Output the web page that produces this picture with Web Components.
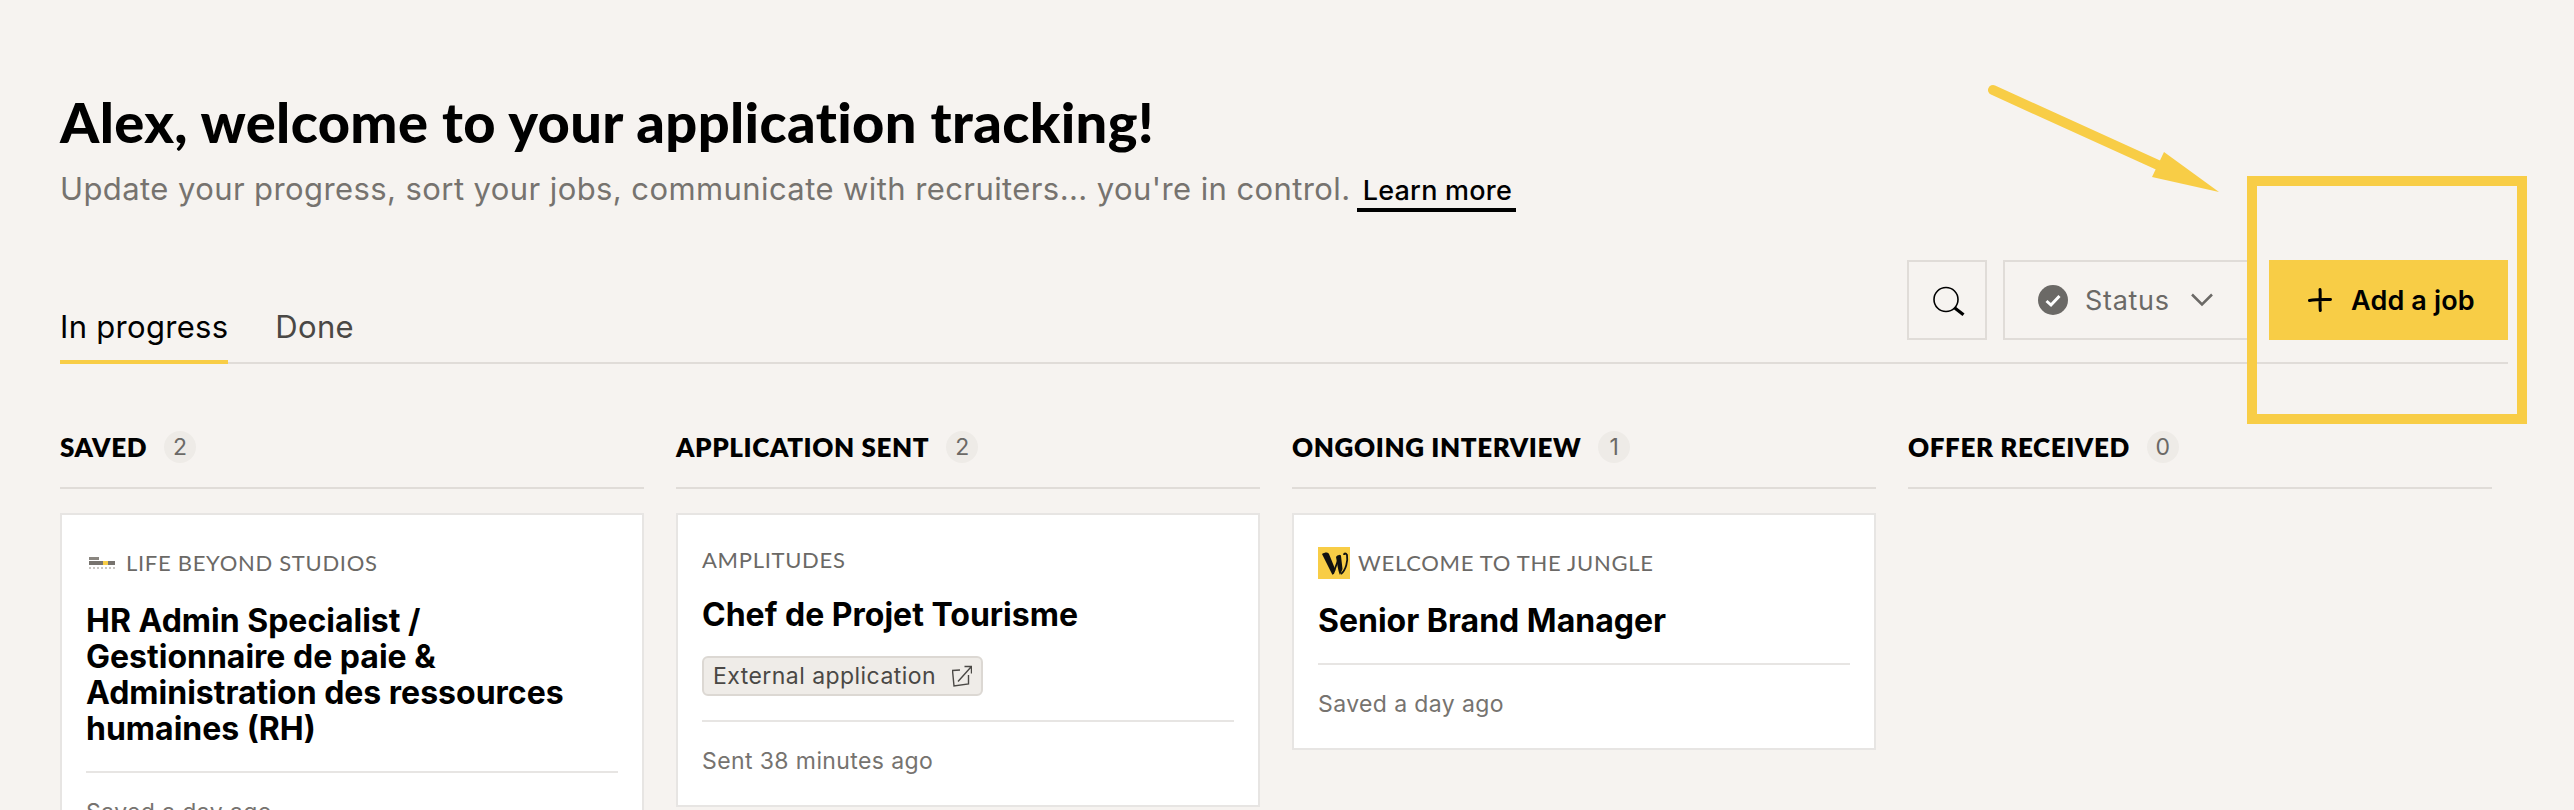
<!DOCTYPE html>
<html lang="en">
<head>
<meta charset="utf-8">
<title>Application tracking</title>
<style>
  html, body { margin: 0; height: 810px; overflow: hidden; background: #f6f3f0; }
  body { font-family: "Inter", "Liberation Sans", sans-serif; color: #000; position: relative; }
  tracker-page { display: block; }
</style>
</head>
<body>
<tracker-page>
  <page-intro>
    <span slot="title">Alex, welcome to your application tracking!</span>
    <span slot="text">Update your progress, sort your jobs, communicate with recruiters... you're in control.</span>
    <span slot="link">Learn more</span>
  </page-intro>

  <tab-toolbar></tab-toolbar>

  <job-board>
    <board-column name="Saved" count="2">
      <job-card company="Life Beyond Studios" logo="life" title="HR Admin Specialist / Gestionnaire de paie &amp; Administration des ressources humaines (RH)" footer="Saved a day ago"></job-card>
    </board-column>
    <board-column name="Application sent" count="2">
      <job-card company="Amplitudes" title="Chef de Projet Tourisme" tag="External application" footer="Sent 38 minutes ago"></job-card>
    </board-column>
    <board-column name="Ongoing interview" count="1">
      <job-card company="Welcome to the Jungle" logo="wttj" title="Senior Brand Manager" footer="Saved a day ago"></job-card>
    </board-column>
    <board-column name="Offer received" count="0"></board-column>
  </job-board>
</tracker-page>

<focus-annotation></focus-annotation>

<script>
const HEAD_FONT = '"Lato", "Liberation Sans", sans-serif';
const BODY_FONT = '"Inter", "Liberation Sans", sans-serif';

class TrackerPage extends HTMLElement {
  constructor() {
    super();
    this.attachShadow({ mode: 'open' });
    this.shadowRoot.innerHTML = `
      <style>
        :host { display: block; padding: 90px 66px 0 60px; }
      </style>
      <slot></slot>
    `;
  }
}
customElements.define('tracker-page', TrackerPage);

// Titulo y texto de bienvenida
class PageIntro extends HTMLElement {
  constructor() {
    super();
    this.attachShadow({ mode: 'open' });
    this.shadowRoot.innerHTML = `
      <style>
        :host { display: block; height: 122px; }
        h1 {
          margin: 0;
          font: 900 56px/64px ${HEAD_FONT};
          letter-spacing: .37px;
          color: #000;
        }
        p {
          margin: 15px 0 0;
          font: 400 31px/40px ${BODY_FONT};
          letter-spacing: .41px;
          color: #76736f;
          display: flex;
          align-items: baseline;
          gap: 6px;
        }
        a {
          font: 500 27px/32px ${BODY_FONT};
          letter-spacing: .25px;
          color: #000;
          border-bottom: 4px solid #000;
          padding: 0 4px 1px 6px;
        }
      </style>
      <h1><slot name="title"></slot></h1>
      <p><span><slot name="text"></slot></span> <a><slot name="link"></slot></a></p>
    `;
  }
}
customElements.define('page-intro', PageIntro);

// Pestañas con buscador, filtro y boton
class TabToolbar extends HTMLElement {
  constructor() {
    super();
    this.attachShadow({ mode: 'open' });
    this.shadowRoot.innerHTML = `
      <style>
        :host {
          display: flex;
          justify-content: space-between;
          align-items: flex-end;
          height: 102px;
          margin-top: 48px;
          border-bottom: 2px solid #e0dcd8;
          font-family: ${BODY_FONT};
        }
        .tabs { display: flex; gap: 47px; }
        .tab {
          font-size: 31px;
          letter-spacing: .3px;
          line-height: 36px;
          padding: 0 0 15px;
          color: #4a4845;
          margin-bottom: -2px;
          border-bottom: 4px solid transparent;
        }
        .tab.on { color: #000; border-bottom-color: #f8cd46; }
        .tools { display: flex; gap: 16px; align-self: flex-start; }
        .box {
          box-sizing: border-box;
          height: 80px;
          border: 2px solid #e0dcd8;
          display: flex;
          align-items: center;
          justify-content: center;
        }
        .search { width: 80px; }
        .search svg { margin-left: 4px; }
        .status {
          width: 250px;
          justify-content: flex-start;
          padding-left: 33px;
          gap: 17px;
          color: #6b6966;
          font-size: 27px;
          letter-spacing: .7px;
        }
        .status svg.chev { margin-left: 4px; }
        .add {
          box-sizing: border-box;
          width: 239px;
          height: 80px;
          padding-left: 39px;
          background: #f8cd46;
          display: flex;
          align-items: center;
          gap: 19px;
          color: #000;
          font-size: 27px;
          letter-spacing: .15px;
          font-weight: 600;
        }
      </style>
      <div class="tabs">
        <div class="tab on">In progress</div>
        <div class="tab">Done</div>
      </div>
      <div class="tools">
        <div class="box search">
          <svg width="32" height="32" viewBox="0 0 32 32" fill="none">
            <circle cx="13" cy="15.500" r="12" stroke="#000" stroke-width="1.600"/>
            <path d="M22.500 22.500l9 7-2 2.500-9-7z" fill="#000"/>
          </svg>
        </div>
        <div class="box status">
          <svg width="30" height="30" viewBox="0 0 30 30">
            <circle cx="15" cy="15" r="15" fill="#6b6966"/>
            <path d="M8.500 16l4.500 4 8.500-9" fill="none" stroke="#fff" stroke-width="3"/>
          </svg>
          <span>Status</span>
          <svg class="chev" width="22" height="14" viewBox="0 0 22 14">
            <path d="M1 1.500l10 10 10-10" fill="none" stroke="#6b6966" stroke-width="2.500"/>
          </svg>
        </div>
        <div class="add">
          <svg width="24" height="24" viewBox="0 0 24 24" fill="none" stroke="#000" stroke-width="3" stroke-linecap="round">
            <path d="M12 1.500c.6 7-.4 14 .3 21M1.500 12.500c7-1 14-.8 21-1"/>
          </svg>
          <span>Add a job</span>
        </div>
      </div>
    `;
  }
}
customElements.define('tab-toolbar', TabToolbar);

class JobBoard extends HTMLElement {
  constructor() {
    super();
    this.attachShadow({ mode: 'open' });
    this.shadowRoot.innerHTML = `
      <style>
        :host {
          display: grid;
          grid-template-columns: repeat(4, 584px);
          gap: 32px;
          margin-top: 67px;
          align-items: start;
        }
      </style>
      <slot></slot>
    `;
  }
}
customElements.define('job-board', JobBoard);

class BoardColumn extends HTMLElement {
  constructor() {
    super();
    this.attachShadow({ mode: 'open' });
    this.shadowRoot.innerHTML = `
      <style>
        :host { display: block; }
        header {
          display: flex;
          align-items: center;
          gap: 17px;
          height: 32px;
          padding-bottom: 24px;
          border-bottom: 2px solid #e0dcd8;
          margin-bottom: 24px;
        }
        h2 {
          margin: 0;
          font: 800 26px/32px ${HEAD_FONT};
          letter-spacing: .6px;
          text-transform: uppercase;
        }
        .count {
          width: 32px;
          height: 32px;
          border-radius: 50%;
          background: #eeebe7;
          color: #6b6966;
          font: 400 23px/32px ${BODY_FONT};
          text-align: center;
        }
      </style>
      <header>
        <h2>${this.getAttribute('name')}</h2>
        <span class="count">${this.getAttribute('count')}</span>
      </header>
      <slot></slot>
    `;
  }
}
customElements.define('board-column', BoardColumn);

const LOGOS = {
  life: `<svg class="logo" width="32" height="32" viewBox="0 0 32 32">
      <rect x="3" y="10" width="10" height="3" fill="#8a8680"/>
      <rect x="3" y="14" width="14" height="4" fill="#77736e"/>
      <rect x="17" y="14" width="5" height="4" fill="#f8cd46"/>
      <rect x="22" y="14" width="7" height="4" fill="#77736e"/>
      <path d="M3 21h26" stroke="#c9c6c2" stroke-width="2" stroke-dasharray="2 2"/>
    </svg>`,
  wttj: `<svg class="logo" width="32" height="32" viewBox="0 0 32 32">
      <rect width="32" height="32" fill="#f8cd46"/>
      <path d="M4 7c3-2 6-2 7 0l6.500 16-3 5zM18 10c1-2 4-3 5-1l1.500 13-2.500 6c-2-4-3-13-4-18z" fill="#111"/>
      <path d="M15 27L22 8M23 27c5-4 7-13 6-19-1-2-3-2-3 0" fill="none" stroke="#111" stroke-width="1.800"/>
    </svg>`
};

// Tarjeta de una oferta
class JobCard extends HTMLElement {
  constructor() {
    super();
    this.attachShadow({ mode: 'open' });
    const logo = LOGOS[this.getAttribute('logo')] || '';
    const tag = this.getAttribute('tag');
    this.shadowRoot.innerHTML = `
      <style>
        :host {
          display: block;
          box-sizing: border-box;
          background: #fff;
          border: 2px solid #e7e5e3;
          padding: 32px 24px 30px;
        }
        .company {
          display: flex;
          align-items: center;
          gap: 8px;
          font: 400 22px/26px ${HEAD_FONT};
          letter-spacing: .7px;
          color: #6b6966;
          text-transform: uppercase;
        }
        h3 {
          margin: 24px 0 0;
          font: 700 32px/36px ${BODY_FONT};
          color: #000;
        }
        .tag-row { display: flex; margin-top: 23px; }
        .tag {
          display: inline-flex;
          align-items: center;
          gap: 16px;
          box-sizing: border-box;
          height: 40px;
          padding: 0 9px;
          background: #efece8;
          border: 2px solid #dcd8d3;
          border-radius: 6px;
          font: 400 23px/1 ${BODY_FONT};
          letter-spacing: .45px;
          color: #4a4845;
        }
        hr {
          border: 0;
          height: 2px;
          background: #e7e5e3;
          margin: 24px 0 25px;
        }
        .foot {
          font: 400 23px/28px ${BODY_FONT};
          letter-spacing: .4px;
          color: #76736f;
        }
      </style>
      <div class="company">${logo}<span>${this.getAttribute('company')}</span></div>
      <h3>${this.getAttribute('title').replace(/&/g, '&amp;')}</h3>
      ${tag ? `<div class="tag-row"><span class="tag">${tag}
        <svg width="20" height="22" viewBox="0 0 20 22" fill="none" stroke="#4a4845" stroke-width="1.400">
          <path d="M8 5L.5 5.500 2 21l14.500-2V10M6 16.500L19 2M12.500 1.500h7v7"/>
        </svg></span></div>` : ''}
      <hr>
      <div class="foot">${this.getAttribute('footer')}</div>
    `;
  }
}
customElements.define('job-card', JobCard);

// Flecha y recuadro amarillos dibujados sobre la captura
class FocusAnnotation extends HTMLElement {
  constructor() {
    super();
    this.attachShadow({ mode: 'open' });
    this.shadowRoot.innerHTML = `
      <style>
        :host { position: absolute; left: 0; top: 0; width: 2574px; height: 810px; pointer-events: none; }
        svg { display: block; }
      </style>
      <svg width="2574" height="810" viewBox="0 0 2574 810">
        <rect x="2252" y="181" width="270" height="238" fill="none" stroke="#f8cd46" stroke-width="10"/>
        <path d="M1993 90L2158 165" stroke="#f8cd46" stroke-width="10" stroke-linecap="round"/>
        <path d="M2164 152L2219 192L2152 177Z" fill="#f8cd46"/>
      </svg>
    `;
  }
}
customElements.define('focus-annotation', FocusAnnotation);
</script>
</body>
</html>
